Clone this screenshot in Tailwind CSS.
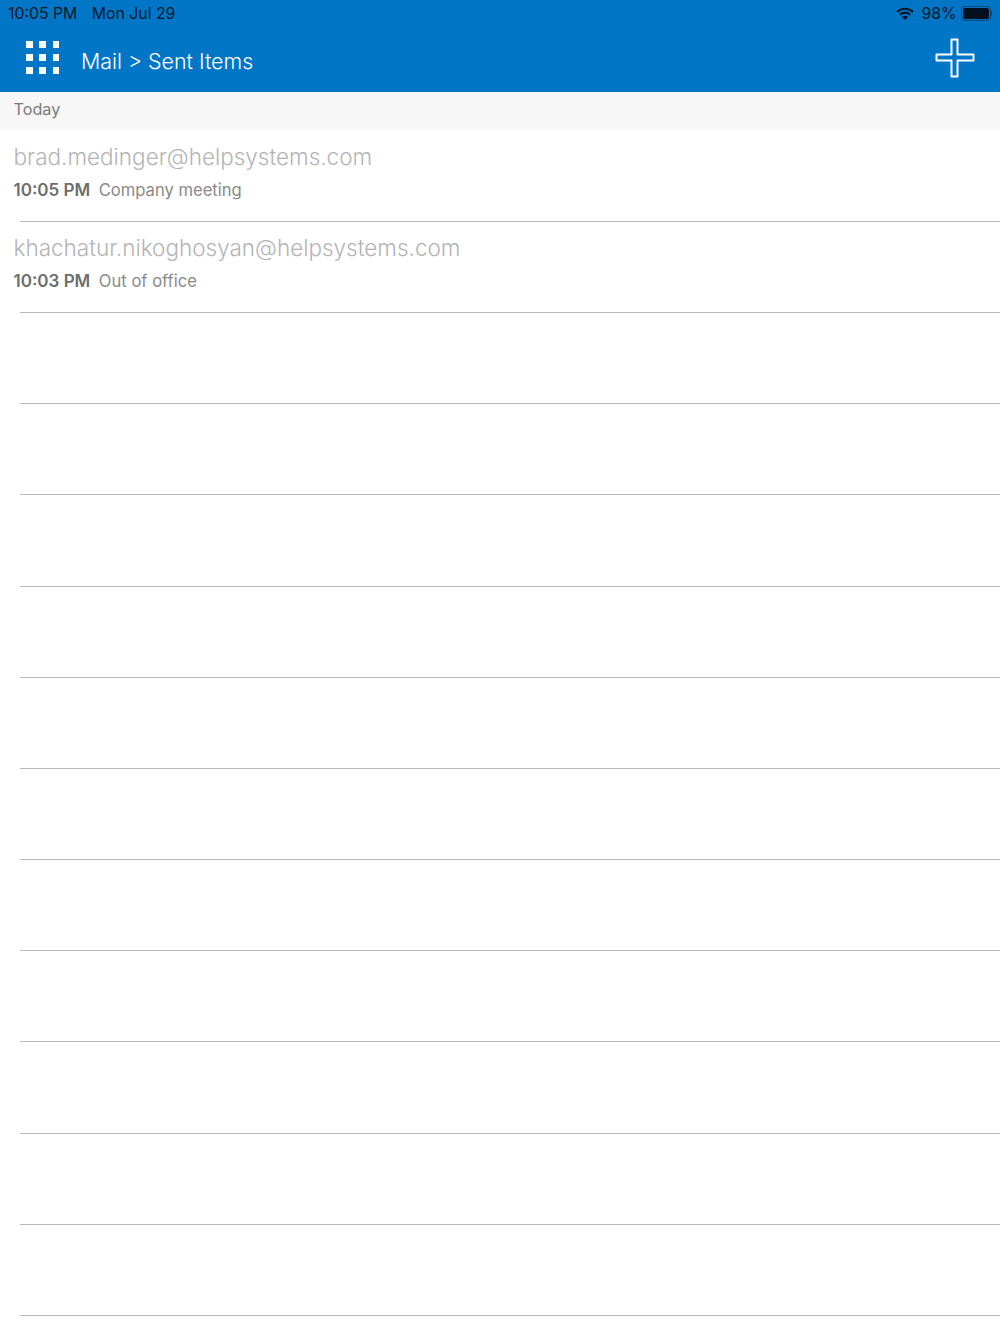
<!DOCTYPE html>
<html><head><meta charset="utf-8"><script src="https://cdn.jsdelivr.net/npm/@tailwindcss/browser@4"></script></head>
<body class="bg-white font-['Inter',sans-serif] w-[1000px] h-[1334px] overflow-hidden">
<header class="bg-[#0176c6] h-[92px] flex flex-col">
  <div class="h-[26px] flex items-center justify-between pl-2 pr-[8px] text-[15.8px] text-[#04182c] pt-[1px]">
    <div class="flex gap-[14.5px]"><span>10:05 PM</span><span>Mon Jul 29</span></div>
    <div class="flex items-center gap-[4px]">
      <svg width="18" height="14" viewBox="0 0 18 14" class="mr-[3px]"><path d="M1 5 A11.5 11.5 0 0 1 17 5" fill="none" stroke="#04182c" stroke-width="2.2"/><path d="M3.8 7.8 A7.5 7.5 0 0 1 14.2 7.8" fill="none" stroke="#04182c" stroke-width="2.2"/><path d="M9 13 L6 10 A4.2 4.2 0 0 1 12 10 Z" fill="#04182c"/></svg>
      <span>98%</span>
      <div class="flex items-center">
        <div class="w-[30px] h-[15px] rounded-[4px] border border-[#04182c]/50 p-[1px]"><div class="w-full h-full rounded-[2px] bg-[#02101f]"></div></div>
        <div class="w-[1.5px] h-[5px] bg-[#04182c]/50 rounded-r-sm"></div>
      </div>
    </div>
  </div>
  <div class="flex-1 flex items-center justify-between pl-[26px] pr-[25px]">
    <div class="flex items-center gap-[22px]">
      <div class="grid grid-cols-3 gap-x-[7px] gap-y-[6px] w-[33px] -mt-[2px]">
        <i class="block w-[6.5px] h-[7px] bg-white"></i><i class="block w-[6.5px] h-[7px] bg-white"></i><i class="block w-[6.5px] h-[7px] bg-white"></i>
        <i class="block w-[6.5px] h-[7px] bg-white"></i><i class="block w-[6.5px] h-[7px] bg-white"></i><i class="block w-[6.5px] h-[7px] bg-white"></i>
        <i class="block w-[6.5px] h-[7px] bg-white"></i><i class="block w-[6.5px] h-[7px] bg-white"></i><i class="block w-[6.5px] h-[7px] bg-white"></i>
      </div>
      <span class="text-white text-[21.4px] font-light mt-[4px]">Mail &gt; Sent Items</span>
    </div>
    <svg width="40" height="40" viewBox="0 0 40 40" class="-mt-[2px]"><path d="M16.5 1.5 H22.5 V16.5 H38.5 V22.5 H22.5 V38.5 H16.5 V22.5 H1.5 V16.5 H16.5 Z" fill="none" stroke="white" stroke-width="2" stroke-linejoin="round"/></svg>
  </div>
</header>
<div class="h-[38px] bg-[#f7f7f7] flex items-center pl-[13.5px] text-[16.2px] text-[#7b7b7b] pb-[3px]">Today</div>
<main class="pt-[0.6px]">
  <div class="h-[91.2px] relative pl-[13.5px] pt-[11.4px]">
    <div class="text-[22.5px] leading-[30px] font-light text-[#b4b4b4]">brad.medinger@helpsystems.com</div>
    <div class="flex gap-[8.5px] mt-[5.6px] leading-[24px] items-baseline"><span class="text-[17px] font-semibold text-[#6d6d6d]">10:05 PM</span><span class="text-[16.6px] text-[#8a8a8a]">Company meeting</span></div>
    <div class="absolute left-5 right-0 bottom-0 h-px bg-[#bababa]"></div>
  </div>
  <div class="h-[91.2px] relative pl-[13.5px] pt-[11.4px]">
    <div class="text-[22.5px] leading-[30px] font-light text-[#b4b4b4]">khachatur.nikoghosyan@helpsystems.com</div>
    <div class="flex gap-[8.5px] mt-[5.6px] leading-[24px] items-baseline"><span class="text-[17px] font-semibold text-[#6d6d6d]">10:03 PM</span><span class="text-[16.6px] text-[#8a8a8a]">Out of office</span></div>
    <div class="absolute left-5 right-0 bottom-0 h-px bg-[#bababa]"></div>
  </div>
  <div class="h-[91.2px] relative"><div class="absolute left-5 right-0 bottom-0 h-px bg-[#bababa]"></div></div>
  <div class="h-[91.2px] relative"><div class="absolute left-5 right-0 bottom-0 h-px bg-[#bababa]"></div></div>
  <div class="h-[91.2px] relative"><div class="absolute left-5 right-0 bottom-0 h-px bg-[#bababa]"></div></div>
  <div class="h-[91.2px] relative"><div class="absolute left-5 right-0 bottom-0 h-px bg-[#bababa]"></div></div>
  <div class="h-[91.2px] relative"><div class="absolute left-5 right-0 bottom-0 h-px bg-[#bababa]"></div></div>
  <div class="h-[91.2px] relative"><div class="absolute left-5 right-0 bottom-0 h-px bg-[#bababa]"></div></div>
  <div class="h-[91.2px] relative"><div class="absolute left-5 right-0 bottom-0 h-px bg-[#bababa]"></div></div>
  <div class="h-[91.2px] relative"><div class="absolute left-5 right-0 bottom-0 h-px bg-[#bababa]"></div></div>
  <div class="h-[91.2px] relative"><div class="absolute left-5 right-0 bottom-0 h-px bg-[#bababa]"></div></div>
  <div class="h-[91.2px] relative"><div class="absolute left-5 right-0 bottom-0 h-px bg-[#bababa]"></div></div>
  <div class="h-[91.2px] relative"><div class="absolute left-5 right-0 bottom-0 h-px bg-[#bababa]"></div></div>
</main>
</body></html>
